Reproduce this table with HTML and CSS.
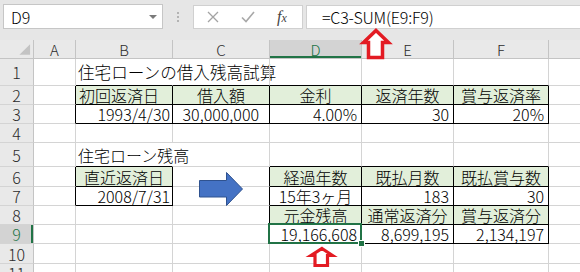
FILE: index.html
```html
<!DOCTYPE html>
<html lang="ja">
<head>
<meta charset="utf-8">
<link rel="stylesheet" href="styles.css">
</head>
<body>
<div class="app">
  <div class="fbar">
    <div class="namebox"><span class="nb-text">D9</span><span class="nb-caret"></span></div>
    <div class="grip"><i></i><i></i><i></i></div>
    <div class="fbtns">
      <svg class="ic-x" width="12" height="12" viewBox="0 0 12 12"><path d="M1 1L11 11M11 1L1 11" stroke="#a3a3a3" stroke-width="1.3" fill="none"/></svg>
      <svg class="ic-ok" width="14" height="12" viewBox="0 0 14 12"><path d="M1 6.5L5 10.5L13 1" stroke="#a8a8a8" stroke-width="1.6" fill="none"/></svg>
      <span class="fx">f<span class="fx-x">x</span></span>
    </div>
    <div class="finput">=C3-SUM(E9:F9)</div>
  </div>

  <div class="sheet">
    <!-- header row -->
    <div class="corner"><svg width="34" height="19" viewBox="0 0 34 19"><polygon points="31,4 31,15 20,15" fill="#c3c3c3"/></svg></div>
    <div class="ch">A</div>
    <div class="ch">B</div>
    <div class="ch">C</div>
    <div class="ch ch-sel">D</div>
    <div class="ch">E</div>
    <div class="ch">F</div>
    <div class="ch"></div>

    <!-- row 1 -->
    <div class="rh">1</div>
    <div class="c"></div>
    <div class="c title nr bb">住宅ローンの借入残高試算</div>
    <div class="c bb"></div>
    <div class="c bb"></div>
    <div class="c bb"></div>
    <div class="c bb"></div>
    <div class="c"></div>

    <!-- row 2 -->
    <div class="rh">2</div>
    <div class="c rb"></div>
    <div class="c box hdr pl">初回返済日</div>
    <div class="c box hdr ctr">借入額</div>
    <div class="c box hdr ctr">金利</div>
    <div class="c box hdr ctr">返済年数</div>
    <div class="c box hdr ctr">賞与返済率</div>
    <div class="c"></div>

    <!-- row 3 -->
    <div class="rh">3</div>
    <div class="c rb"></div>
    <div class="c box num tight">1993/4/30</div>
    <div class="c box num wide">30,000,000</div>
    <div class="c box num">4.00%</div>
    <div class="c box num">30</div>
    <div class="c box num">20%</div>
    <div class="c"></div>

    <!-- row 4 -->
    <div class="rh">4</div>
    <div class="c"></div>
    <div class="c"></div>
    <div class="c"></div>
    <div class="c"></div>
    <div class="c"></div>
    <div class="c"></div>
    <div class="c"></div>

    <!-- row 5 -->
    <div class="rh">5</div>
    <div class="c"></div>
    <div class="c sub nr bb">住宅ローン残高</div>
    <div class="c"></div>
    <div class="c bb"></div>
    <div class="c bb"></div>
    <div class="c bb"></div>
    <div class="c"></div>

    <!-- row 6 -->
    <div class="rh">6</div>
    <div class="c rb"></div>
    <div class="c box hdr ctr">直近返済日</div>
    <div class="c rb"></div>
    <div class="c box hdr ctr">経過年数</div>
    <div class="c box hdr ctr">既払月数</div>
    <div class="c box hdr ctr">既払賞与数</div>
    <div class="c"></div>

    <!-- row 7 -->
    <div class="rh">7</div>
    <div class="c rb"></div>
    <div class="c box num tight">2008/7/31</div>
    <div class="c rb"></div>
    <div class="c box ctr">15年3ヶ月</div>
    <div class="c box num">183</div>
    <div class="c box num">30</div>
    <div class="c"></div>

    <!-- row 8 -->
    <div class="rh">8</div>
    <div class="c"></div>
    <div class="c"></div>
    <div class="c rb"></div>
    <div class="c box hdr ctr">元金残高</div>
    <div class="c box hdr ctr">通常返済分</div>
    <div class="c box hdr ctr">賞与返済分</div>
    <div class="c"></div>

    <!-- row 9 -->
    <div class="rh rh-sel">9</div>
    <div class="c"></div>
    <div class="c"></div>
    <div class="c rb"></div>
    <div class="c box num selcell">19,166,608</div>
    <div class="c box num">8,699,195</div>
    <div class="c box num">2,134,197</div>
    <div class="c"></div>

    <!-- row 10 -->
    <div class="rh">10</div>
    <div class="c"></div>
    <div class="c"></div>
    <div class="c"></div>
    <div class="c"></div>
    <div class="c"></div>
    <div class="c"></div>
    <div class="c"></div>

    <!-- row 11 -->
    <div class="rh rh-top">11</div>
    <div class="c"></div>
    <div class="c"></div>
    <div class="c"></div>
    <div class="c"></div>
    <div class="c"></div>
    <div class="c"></div>
    <div class="c"></div>
  </div>

  <svg class="annot" width="580" height="272" viewBox="0 0 580 272">
    <polygon points="199.5,180.5 226.5,180.5 226.5,172.5 242.5,189 226.5,205.5 226.5,197 199.5,197" fill="#4472c4" stroke="#2f528f" stroke-width="1"/>
    <polygon points="376,30.5 388.5,42.5 382.5,42.5 382.5,57.5 368.5,57.5 368.5,42.5 363.5,42.5" fill="#fff" stroke="#e31b23" stroke-width="3.5" stroke-linejoin="miter"/>
    <polygon points="322,248.5 332.5,255.5 327.5,255.5 327.5,265.5 315,265.5 315,255.5 311,255.5" fill="#fff" stroke="#e31b23" stroke-width="3.2" stroke-linejoin="miter"/>
  </svg>
</div>
</body>
</html>
```

FILE: styles.css
```css
html, body {
  margin: 0;
  padding: 0;
  background: #ffffff;
}

body {
  font-family: "Noto Sans CJK JP", "Noto Sans", sans-serif;
  font-weight: 300;
  color: #000;
  overflow: hidden;
}

.app {
  position: relative;
  width: 580px;
  height: 272px;
  overflow: hidden;
}

/* ---------- formula bar ---------- */
.fbar {
  height: 40px;
  background: #e6e6e6;
  display: flex;
  align-items: flex-start;
  padding-top: 4px;
  box-sizing: border-box;
}

.namebox {
  margin-left: 3px;
  width: 160px;
  height: 25px;
  box-sizing: border-box;
  background: #fff;
  border: 1px solid #c6c6c6;
  display: flex;
  align-items: center;
  padding-left: 7px;
  font-size: 16px;
  line-height: 1;
}

.nb-text {
  flex: 1;
}

.nb-caret {
  width: 0;
  height: 0;
  border-left: 4px solid transparent;
  border-right: 4px solid transparent;
  border-top: 4px solid #7a7a7a;
  margin-right: 5px;
}

.grip {
  margin-left: 14px;
  margin-top: 8px;
  width: 2px;
  display: flex;
  flex-direction: column;
  gap: 2px;
}

.grip i {
  display: block;
  width: 2px;
  height: 2px;
  background: #b3b3b3;
}

.fbtns {
  margin-left: 14px;
  margin-top: 1px;
  width: 110px;
  height: 24px;
  box-sizing: border-box;
  background: #fff;
  border: 1px solid #d0d0d0;
  display: flex;
  align-items: center;
}

.ic-x {
  margin-left: 13px;
}

.ic-ok {
  margin-left: 22px;
}

.fx {
  margin-left: 22px;
  font-family: "Liberation Serif", serif;
  font-style: italic;
  font-weight: 400;
  font-size: 16px;
  color: #444;
  line-height: 1;
}

.fx-x {
  font-size: 12px;
}

.finput {
  margin-left: 3px;
  margin-top: 1px;
  flex: 1;
  height: 24px;
  box-sizing: border-box;
  background: #fff;
  border: 1px solid #d0d0d0;
  border-right: none;
  display: flex;
  align-items: center;
  padding-left: 15px;
  font-size: 16px;
  letter-spacing: -0.2px;
  line-height: 1;
}

/* ---------- sheet ---------- */
.sheet {
  display: grid;
  grid-template-columns: 34px 42px 97px 97px 92px 92px 95px 40px;
  grid-template-rows: 19px 27px 19px 19px 19px 24px 20px 19px 19px 19px 20px 19px;
  background: #fff;
  width: 589px;
}

.corner,
.ch,
.rh {
  background: #e9e9e9;
  box-sizing: border-box;
  border-right: 1px solid #c4c4c4;
  border-bottom: 1px solid #c4c4c4;
  color: #2b2b2b;
  display: flex;
  align-items: center;
  justify-content: center;
  line-height: 1;
}

.corner {
  padding: 0;
  position: relative;
}

.corner svg {
  display: block;
}

.ch {
  font-size: 15px;
}

.ch-sel {
  background: #d3d3d3;
  color: #217346;
  box-shadow: inset 0 -2px 0 #217346;
}

.rh {
  font-size: 16px;
  border-bottom-color: #d4d4d4;
}

.rh-sel {
  background: #d3d3d3;
  color: #217346;
  box-shadow: inset -2px 0 0 #217346;
}

.rh-top {
  align-items: flex-start;
  padding-top: 1px;
}

.c {
  box-sizing: border-box;
  border-right: 1px solid #d4d4d4;
  border-bottom: 1px solid #d4d4d4;
  display: flex;
  align-items: center;
  padding: 0 3px;
  white-space: nowrap;
  font-size: 16px;
  line-height: 1;
  min-width: 0;
}

.title {
  font-size: 16.6px;
  padding-left: 2px;
}

.sub {
  padding-left: 2px;
}

.pl {
  padding-left: 3px;
}

.nr {
  border-right-color: transparent;
}

.bb {
  border-bottom-color: #000;
}

.rb {
  border-right-color: #000;
}

.box {
  border-right-color: #000;
  border-bottom-color: #000;
}

.hdr {
  background: #e2efda;
}

.ctr {
  justify-content: center;
}

.num {
  justify-content: flex-end;
  padding-right: 4px;
}

.tight {
  padding-right: 2px;
}

.wide {
  padding-right: 10px;
}

.selcell {
  position: relative;
}

.selcell::after {
  content: "";
  position: absolute;
  left: -2px;
  top: -2px;
  right: -1px;
  bottom: -1px;
  border: 2px solid #217346;
  pointer-events: none;
}

.selcell::before {
  content: "";
  position: absolute;
  right: -4px;
  bottom: -4px;
  width: 5px;
  height: 5px;
  background: #217346;
  border: 1px solid #fff;
  z-index: 2;
}

/* ---------- annotations ---------- */
.annot {
  position: absolute;
  left: 0;
  top: 0;
  pointer-events: none;
}
```
